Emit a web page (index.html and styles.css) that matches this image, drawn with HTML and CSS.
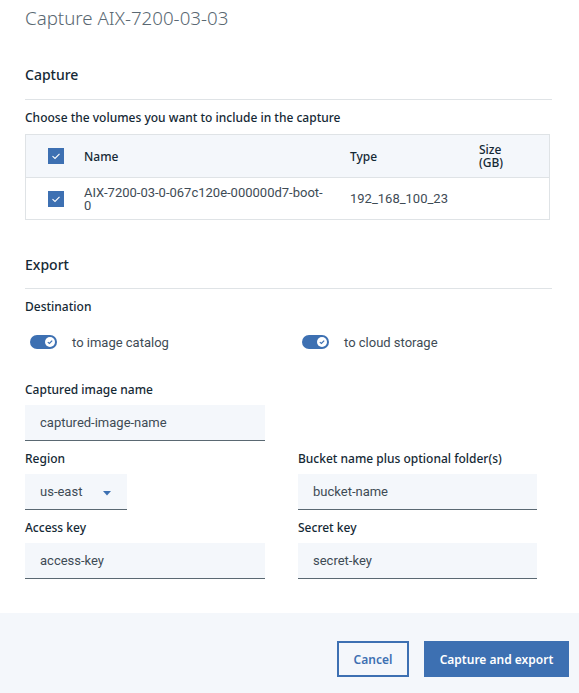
FILE: index.html
```html
<!DOCTYPE html>
<html>
<head>
<meta charset="utf-8">
<link rel="stylesheet" href="styles.css">
</head>
<body>
<div class="modal">
  <div class="content">
    <h1 class="title">Capture AIX-7200-03-03</h1>

    <h2 class="section">Capture</h2>
    <div class="rule"></div>
    <p class="label choose">Choose the volumes you want to include in the capture</p>

    <div class="table">
      <div class="row head">
        <div class="cell check"><span class="checkbox"><svg viewBox="0 0 16 16" width="16" height="16"><path d="M4.5 8.2 L7 10.4 L11.5 5.8" fill="none" stroke="#fff" stroke-width="1.1"/></svg></span></div>
        <div class="cell name">Name</div>
        <div class="cell type">Type</div>
        <div class="cell size">Size<br>(GB)</div>
      </div>
      <div class="row data">
        <div class="cell check"><span class="checkbox"><svg viewBox="0 0 16 16" width="16" height="16"><path d="M4.5 8.2 L7 10.4 L11.5 5.8" fill="none" stroke="#fff" stroke-width="1.1"/></svg></span></div>
        <div class="cell name val">AIX-7200-03-0-067c120e-000000d7-boot-<br>0</div>
        <div class="cell type val">192_168_100_23</div>
        <div class="cell size"></div>
      </div>
    </div>

    <h2 class="section export">Export</h2>
    <div class="rule"></div>
    <p class="label dest">Destination</p>

    <div class="toggles">
      <div class="toggle-item">
        <span class="toggle"><span class="knob"><svg viewBox="0 0 10 10" width="10" height="10"><path d="M2.8 5.1 L4.4 6.5 L7.2 3.6" fill="none" stroke="#3d70b2" stroke-width="1.2"/></svg></span></span>
        <span class="toggle-label">to image catalog</span>
      </div>
      <div class="toggle-item">
        <span class="toggle"><span class="knob"><svg viewBox="0 0 10 10" width="10" height="10"><path d="M2.8 5.1 L4.4 6.5 L7.2 3.6" fill="none" stroke="#3d70b2" stroke-width="1.2"/></svg></span></span>
        <span class="toggle-label">to cloud storage</span>
      </div>
    </div>

    <div class="form">
      <div class="field f-name">
        <label class="label">Captured image name</label>
        <div class="input">captured-image-name</div>
      </div>
      <div class="field f-region">
        <label class="label">Region</label>
        <div class="input select">us-east<svg class="caret" viewBox="0 0 8 5" width="8" height="5"><path d="M0 0 L8 0 L4 4.5 Z" fill="#3d70b2"/></svg></div>
      </div>
      <div class="field f-bucket">
        <label class="label">Bucket name plus optional folder(s)</label>
        <div class="input">bucket-name</div>
      </div>
      <div class="field f-access">
        <label class="label">Access key</label>
        <div class="input">access-key</div>
      </div>
      <div class="field f-secret">
        <label class="label">Secret key</label>
        <div class="input">secret-key</div>
      </div>
    </div>
  </div>

  <div class="footer">
    <button class="btn secondary">Cancel</button>
    <button class="btn primary">Capture and export</button>
  </div>
</div>
</body>
</html>
```

FILE: styles.css
```css
* { box-sizing: border-box; }
html, body { margin: 0; padding: 0; background: #fff; }
body {
  font-family: "Noto Sans", "Open Sans", sans-serif;
  color: #152935;
  overflow: hidden;
}
.modal { width: 579px; height: 693px; display: flex; flex-direction: column; }
.content { padding: 6px 27px 0 25px; }
.title {
  margin: 0;
  font-size: 18.7px;
  line-height: 24px;
  font-weight: 300;
  color: #5a6872;
}
.section {
  margin: 35px 0 0;
  font-size: 14px;
  line-height: 20px;
  font-weight: 500;
  color: #152935;
}
.rule { height: 1px; background: #dfe3e6; margin-top: 14px; }
.section.export + .rule { margin-top: 13px; }
.label {
  display: block;
  margin: 0;
  font-size: 12px;
  line-height: 16px;
  font-weight: 500;
  color: #152935;
}
.choose { margin-top: 10px; }
.dest { margin-top: 10px; }

.table {
  margin-top: 8px;
  width: 525px;
  border: 1px solid #dfe3e6;
}
.row { display: flex; align-items: center; }
.row.head { height: 43px; background: #f4f7fb; border-bottom: 1px solid #dfe3e6; font-size: 12px; font-weight: 500; }
.row.data { height: 41px; }
.cell { font-size: 12px; line-height: 13px; }
.check { width: 58px; flex-shrink: 0; padding-left: 22px; display: flex; align-items: center; }
.checkbox { width: 16px; height: 16px; background: #3d70b2; display: block; }
.checkbox svg { display: block; }
.name { width: 266px; flex-shrink: 0; padding-right: 8px; }
.type { width: 129px; flex-shrink: 0; }
.size { flex: 1; font-size: 12px; line-height: 13px; }
.val { font-family: Roboto, "Noto Sans", sans-serif; color: #3e4b55; font-size: 13px; line-height: 13px; }

.toggles { display: flex; margin-top: 17px; height: 20px; align-items: center; }
.toggle-item { display: flex; align-items: center; flex-shrink: 0; }
.toggle-item:first-child { width: 273px; padding-left: 5px; }
.toggle-item + .toggle-item { padding-left: 4px; }
.toggle {
  width: 27px; height: 14px; border-radius: 7px; background: #3d70b2;
  display: flex; align-items: center; justify-content: flex-end; padding-right: 2px;
}
.knob { width: 10px; height: 10px; border-radius: 50%; background: #fff; display: block; }
.knob svg { display: block; }
.toggle-label {
  margin-left: 15px;
  font-family: Roboto, "Noto Sans", sans-serif;
  font-size: 13px; color: #3e4b55;
}

.form {
  margin-top: 30px;
  display: grid;
  grid-template-columns: 240px 239px;
  column-gap: 33px;
  row-gap: 10px;
}
.f-name { grid-column: 1; grid-row: 1; }
.f-region { grid-column: 1; grid-row: 2; }
.f-bucket { grid-column: 2; grid-row: 2; }
.f-access { grid-column: 1; grid-row: 3; }
.f-secret { grid-column: 2; grid-row: 3; }
.field .label { margin-bottom: 7px; }
.input {
  height: 36px;
  background: #f4f7fb;
  border-bottom: 1px solid #5a6872;
  padding: 0 15px 1px;
  display: flex; align-items: center;
  font-family: Roboto, "Noto Sans", sans-serif;
  font-size: 13px; color: #3e4b55;
}
.select { width: 102px; position: relative; }
.caret { position: absolute; left: 78px; top: 17px; }

.footer {
  margin-top: 34px;
  flex: 1;
  background: #f4f7fb;
  display: flex;
  justify-content: flex-end;
  align-items: flex-start;
  padding: 28px 10px 0 0;
  gap: 15px;
}
.btn {
  height: 36px;
  font-family: "Noto Sans", sans-serif;
  font-size: 12px;
  font-weight: 600;
  cursor: pointer;
}
.btn.secondary {
  width: 72px;
  background: transparent;
  border: 2px solid #3d70b2;
  color: #3d70b2;
}
.btn.primary {
  width: 145px;
  background: #3d70b2;
  border: none;
  color: #fff;
}
```
